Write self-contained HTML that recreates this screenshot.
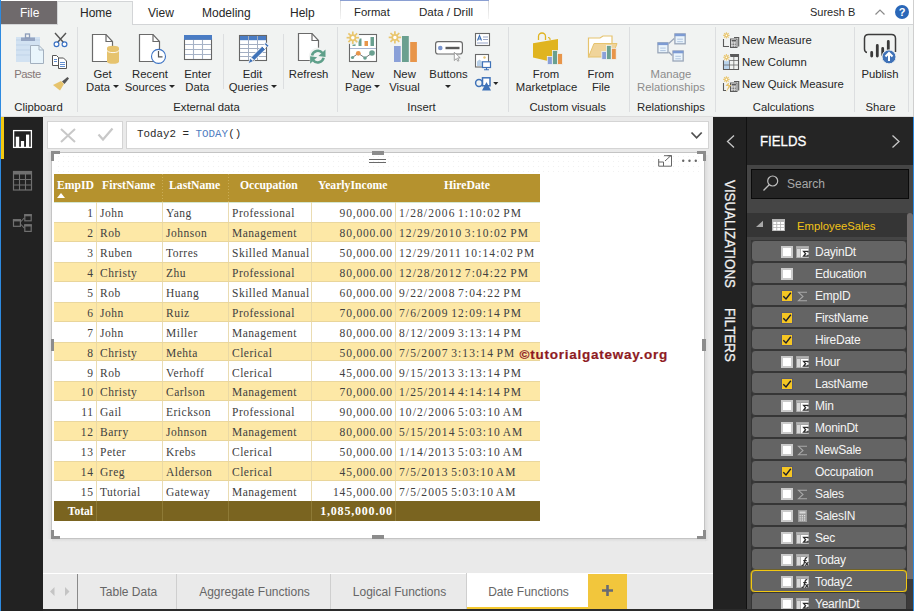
<!DOCTYPE html><html><head><meta charset="utf-8"><style>
*{margin:0;padding:0;box-sizing:border-box}
html,body{width:914px;height:611px;overflow:hidden;background:#fff;position:relative;font-family:"Liberation Sans",sans-serif;color:#252423}
.a{position:absolute}
.t{position:absolute;white-space:nowrap;font-size:11.3px;line-height:13px;color:#262626}
.c{text-align:center}
</style></head><body><div class="a" style="left:0;top:0;width:1px;height:611px;background:#2d8ae0"></div>
<div class="a" style="left:913px;top:0;width:1px;height:117px;background:#cfcfcf"></div>
<div class="a" style="left:1px;top:24px;width:912px;height:1px;background:#d3d5d7"></div>
<div class="a" style="left:1px;top:1px;width:56px;height:23px;background:#6f6a6c"></div>
<div class="t" style="left:20px;top:7px;font-size:12px;color:#fff">File</div>
<div class="a" style="left:57px;top:1px;width:76px;height:24px;background:#f1f3f2;border:1px solid #d3d5d7;border-bottom:none"></div>
<div class="t" style="left:80px;top:7px;font-size:12px">Home</div>
<div class="t" style="left:148px;top:7px;font-size:12px">View</div>
<div class="t" style="left:202px;top:7px;font-size:12px">Modeling</div>
<div class="t" style="left:290px;top:7px;font-size:12px">Help</div>
<div class="a" style="left:340px;top:0;width:149px;height:1px;background:#8a9fd2"></div>
<div class="a" style="left:340px;top:1px;width:1px;height:18px;background:linear-gradient(180deg,#d6d6d6,#f4f4f4)"></div>
<div class="a" style="left:488px;top:1px;width:1px;height:18px;background:linear-gradient(180deg,#d6d6d6,#f4f4f4)"></div>
<div class="t" style="left:354px;top:6px;font-size:11.3px">Format</div>
<div class="t" style="left:419px;top:5px;font-size:11.6px">Data / Drill</div>
<div class="t" style="left:810px;top:6px;font-size:11px">Suresh B</div>
<svg class="a" style="left:875px;top:9px" width="10" height="6"><path d="M0.5 5.5 L5 1 L9.5 5.5" stroke="#8a8a8a" fill="none" stroke-width="1.2"/></svg>
<div class="a" style="left:895px;top:5px;width:14px;height:14px;border-radius:50%;background:#2a67b8;color:#fff;font-weight:bold;font-size:11px;line-height:14px;text-align:center">?</div>
<div class="a" style="left:1px;top:25px;width:912px;height:91px;background:#f1f3f2"></div>
<div class="a" style="left:1px;top:116px;width:912px;height:1px;background:#dcdcdc"></div>
<div class="a" style="left:77px;top:27px;width:1px;height:85px;background:#dcdee0"></div>
<div class="a" style="left:223px;top:34px;width:1px;height:55px;background:#dcdee0"></div>
<div class="a" style="left:283px;top:34px;width:1px;height:55px;background:#dcdee0"></div>
<div class="a" style="left:337px;top:27px;width:1px;height:85px;background:#dcdee0"></div>
<div class="a" style="left:508px;top:27px;width:1px;height:85px;background:#dcdee0"></div>
<div class="a" style="left:629px;top:27px;width:1px;height:85px;background:#dcdee0"></div>
<div class="a" style="left:715px;top:27px;width:1px;height:85px;background:#dcdee0"></div>
<div class="a" style="left:854px;top:27px;width:1px;height:85px;background:#dcdee0"></div>
<div class="a" style="left:908px;top:27px;width:1px;height:85px;background:#dcdee0"></div>
<div class="t" style="left:-21.5px;top:100.5px;width:120px;text-align:center;">Clipboard</div>
<div class="t" style="left:146.5px;top:100.5px;width:120px;text-align:center;">External data</div>
<div class="t" style="left:361.5px;top:100.5px;width:120px;text-align:center;">Insert</div>
<div class="t" style="left:507.70000000000005px;top:100.5px;width:120px;text-align:center;">Custom visuals</div>
<div class="t" style="left:611px;top:100.5px;width:120px;text-align:center;">Relationships</div>
<div class="t" style="left:723.5px;top:100.5px;width:120px;text-align:center;">Calculations</div>
<div class="t" style="left:820.5px;top:100.5px;width:120px;text-align:center;">Share</div>
<div class="t" style="left:-32.5px;top:67.5px;width:120px;text-align:center;color:#857777;letter-spacing:-0.5px">Paste</div>
<div class="t" style="left:42.5px;top:67.5px;width:120px;text-align:center;">Get</div>
<div class="t" style="left:42.5px;top:80.5px;width:120px;text-align:center;">Data<span style="display:inline-block;width:0;height:0;border-left:3px solid transparent;border-right:3px solid transparent;border-top:3px solid #262626;vertical-align:middle;margin-left:3px;margin-bottom:2px"></span></div>
<div class="t" style="left:90px;top:67.5px;width:120px;text-align:center;">Recent</div>
<div class="t" style="left:90px;top:80.5px;width:120px;text-align:center;">Sources<span style="display:inline-block;width:0;height:0;border-left:3px solid transparent;border-right:3px solid transparent;border-top:3px solid #262626;vertical-align:middle;margin-left:3px;margin-bottom:2px"></span></div>
<div class="t" style="left:137.8px;top:67.5px;width:120px;text-align:center;">Enter</div>
<div class="t" style="left:137.3px;top:80.5px;width:120px;text-align:center;">Data</div>
<div class="t" style="left:192.5px;top:67.5px;width:120px;text-align:center;">Edit</div>
<div class="t" style="left:193px;top:80.5px;width:120px;text-align:center;">Queries<span style="display:inline-block;width:0;height:0;border-left:3px solid transparent;border-right:3px solid transparent;border-top:3px solid #262626;vertical-align:middle;margin-left:3px;margin-bottom:2px"></span></div>
<div class="t" style="left:248.60000000000002px;top:67.5px;width:120px;text-align:center;">Refresh</div>
<div class="t" style="left:302.8px;top:67.5px;width:120px;text-align:center;">New</div>
<div class="t" style="left:302.8px;top:80.5px;width:120px;text-align:center;">Page<span style="display:inline-block;width:0;height:0;border-left:3px solid transparent;border-right:3px solid transparent;border-top:3px solid #262626;vertical-align:middle;margin-left:3px;margin-bottom:2px"></span></div>
<div class="t" style="left:344.5px;top:67.5px;width:120px;text-align:center;">New</div>
<div class="t" style="left:344.5px;top:80.5px;width:120px;text-align:center;">Visual</div>
<div class="t" style="left:388.5px;top:67.5px;width:120px;text-align:center;">Buttons</div>
<div class="a" style="left:445px;top:85px;width:0;height:0;border-left:3px solid transparent;border-right:3px solid transparent;border-top:3px solid #262626"></div>
<div class="t" style="left:486px;top:67.5px;width:120px;text-align:center;">From</div>
<div class="t" style="left:486.5px;top:80.5px;width:120px;text-align:center;">Marketplace</div>
<div class="t" style="left:540.8px;top:67.5px;width:120px;text-align:center;">From</div>
<div class="t" style="left:541px;top:80.5px;width:120px;text-align:center;">File</div>
<div class="t" style="left:611px;top:67.5px;width:120px;text-align:center;color:#8c8c8c;">Manage</div>
<div class="t" style="left:611px;top:80.5px;width:120px;text-align:center;color:#8c8c8c;">Relationships</div>
<div class="t" style="left:742px;top:34px;">New Measure</div>
<div class="t" style="left:742px;top:56px;">New Column</div>
<div class="t" style="left:742px;top:78px;">New Quick Measure</div>
<div class="t" style="left:820px;top:67.5px;width:120px;text-align:center;">Publish</div>
<div class="a" style="left:1px;top:117px;width:42px;height:494px;background:#222222"></div>
<div class="a" style="left:1px;top:117px;width:3px;height:42px;background:#f2c811"></div>
<div class="a" style="left:43px;top:117px;width:670px;height:494px;background:#eaeaea"></div>
<div class="a" style="left:47px;top:121px;width:76px;height:28px;background:#fff;border:1px solid #d4d4d4"></div>
<div class="a" style="left:126px;top:121px;width:583px;height:28px;background:#fff;border:1px solid #d4d4d4"></div>
<div class="a" style="left:137px;top:127px;font-family:'Liberation Mono',monospace;font-size:10.85px;line-height:14px;color:#2a2a2a;white-space:nowrap">Today2 = <span style="color:#4f7dbf">TODAY</span>()</div>
<div class="a" style="left:47px;top:152px;width:5px;height:387px;background:linear-gradient(90deg,#eaeaea,#dedede)"></div>
<div class="a" style="left:52px;top:539px;width:654px;height:3px;background:linear-gradient(180deg,#dcdcdc,#eaeaea)"></div>
<div class="a" style="left:705px;top:155px;width:4px;height:386px;background:linear-gradient(90deg,#dcdcdc,#eaeaea)"></div>
<div class="a" style="left:51px;top:152px;width:654px;height:387px;background:#fff;border:1px solid #c4c4c4"></div>
<div class="a" style="left:56px;top:154px;width:644px;height:19px;background-image:radial-gradient(circle,#e6e6e6 0.5px,transparent 0.8px);background-size:5px 5px;opacity:0.55"></div>
<div class="a" style="left:51px;top:151px;width:9px;height:3px;background:#8c8c8c"></div>
<div class="a" style="left:51px;top:151px;width:3px;height:10px;background:#8c8c8c"></div>
<div class="a" style="left:697px;top:151px;width:9px;height:3px;background:#8c8c8c"></div>
<div class="a" style="left:703px;top:151px;width:3px;height:10px;background:#8c8c8c"></div>
<div class="a" style="left:51px;top:536px;width:9px;height:3px;background:#8c8c8c"></div>
<div class="a" style="left:51px;top:530px;width:3px;height:9px;background:#8c8c8c"></div>
<div class="a" style="left:697px;top:536px;width:9px;height:3px;background:#8c8c8c"></div>
<div class="a" style="left:703px;top:530px;width:3px;height:9px;background:#8c8c8c"></div>
<div class="a" style="left:372px;top:151px;width:12px;height:4px;background:#8c8c8c"></div>
<div class="a" style="left:372px;top:535px;width:12px;height:4px;background:#8c8c8c"></div>
<div class="a" style="left:51px;top:339px;width:3px;height:12px;background:#8c8c8c"></div>
<div class="a" style="left:702px;top:339px;width:4px;height:12px;background:#8c8c8c"></div>
<div class="a" style="left:369px;top:159px;width:17px;height:1px;background:#6a6a6a"></div>
<div class="a" style="left:369px;top:162px;width:17px;height:1px;background:#6a6a6a"></div>
<div class="a" style="left:54px;top:174px;width:486px;height:28px;background:#b5922e"></div>
<div class="a" style="left:54px;top:202px;width:486px;height:1px;background:#d3e6d0"></div>
<div class="a" style="left:162px;top:174px;width:1px;height:28px;background-image:linear-gradient(180deg,#d8bf70 50%,transparent 50%);background-size:1px 3px;opacity:0.6"></div>
<div class="a" style="left:228px;top:174px;width:1px;height:28px;background-image:linear-gradient(180deg,#d8bf70 50%,transparent 50%);background-size:1px 3px;opacity:0.6"></div>
<div class="a" style="left:57px;top:177px;font-family:'Liberation Serif',serif;font-size:11.7px;line-height:18px;color:#fff;font-weight:bold;white-space:nowrap">EmpID</div>
<div class="a" style="left:102px;top:177px;font-family:'Liberation Serif',serif;font-size:11.7px;line-height:18px;color:#fff;font-weight:bold;white-space:nowrap">FirstName</div>
<div class="a" style="left:169px;top:177px;font-family:'Liberation Serif',serif;font-size:11.7px;line-height:18px;color:#fff;font-weight:bold;white-space:nowrap">LastName</div>
<div class="a" style="left:240px;top:177px;font-family:'Liberation Serif',serif;font-size:11.7px;line-height:18px;color:#fff;font-weight:bold;white-space:nowrap">Occupation</div>
<div class="a" style="left:318px;top:177px;font-family:'Liberation Serif',serif;font-size:11.7px;line-height:18px;color:#fff;font-weight:bold;white-space:nowrap">YearlyIncome</div>
<div class="a" style="left:444px;top:177px;font-family:'Liberation Serif',serif;font-size:11.7px;line-height:18px;color:#fff;font-weight:bold;white-space:nowrap">HireDate</div>
<div class="a" style="left:57px;top:193px;width:0;height:0;border-left:4.5px solid transparent;border-right:4.5px solid transparent;border-bottom:5px solid #fff"></div>
<div class="a" style="left:54px;top:204.1px;width:42px;height:19.93px;text-align:right;padding-right:2.20px;font-family:'Liberation Serif',serif;font-size:11.5px;letter-spacing:0.8px;word-spacing:0px;line-height:19.93px;color:#404040;white-space:nowrap;">1</div>
<div class="a" style="left:96px;top:204.1px;width:66px;height:19.93px;text-align:left;padding-left:4px;font-family:'Liberation Serif',serif;font-size:11.5px;letter-spacing:0.5px;word-spacing:0px;line-height:19.93px;color:#404040;white-space:nowrap;">John</div>
<div class="a" style="left:162px;top:204.1px;width:66px;height:19.93px;text-align:left;padding-left:4px;font-family:'Liberation Serif',serif;font-size:11.5px;letter-spacing:0.5px;word-spacing:0px;line-height:19.93px;color:#404040;white-space:nowrap;">Yang</div>
<div class="a" style="left:228px;top:204.1px;width:83px;height:19.93px;text-align:left;padding-left:4px;font-family:'Liberation Serif',serif;font-size:11.5px;letter-spacing:0.5px;word-spacing:0px;line-height:19.93px;color:#404040;white-space:nowrap;">Professional</div>
<div class="a" style="left:311px;top:204.1px;width:84px;height:19.93px;text-align:right;padding-right:2.20px;font-family:'Liberation Serif',serif;font-size:11.5px;letter-spacing:0.8px;word-spacing:0px;line-height:19.93px;color:#404040;white-space:nowrap;">90,000.00</div>
<div class="a" style="left:395px;top:204.1px;width:145px;height:19.93px;text-align:left;padding-left:4px;font-family:'Liberation Serif',serif;font-size:11.5px;letter-spacing:1.1px;word-spacing:-1.5px;line-height:19.93px;color:#404040;white-space:nowrap;">1/28/2006 1:10:02 PM</div>
<div class="a" style="left:54px;top:221.93px;width:486px;height:19.93px;background:#fde8a6;border-top:1px solid #ead79e;border-bottom:1px solid #e9d59a"></div>
<div class="a" style="left:54px;top:224.03px;width:42px;height:19.93px;text-align:right;padding-right:2.20px;font-family:'Liberation Serif',serif;font-size:11.5px;letter-spacing:0.8px;word-spacing:0px;line-height:19.93px;color:#404040;white-space:nowrap;">2</div>
<div class="a" style="left:96px;top:224.03px;width:66px;height:19.93px;text-align:left;padding-left:4px;font-family:'Liberation Serif',serif;font-size:11.5px;letter-spacing:0.5px;word-spacing:0px;line-height:19.93px;color:#404040;white-space:nowrap;">Rob</div>
<div class="a" style="left:162px;top:224.03px;width:66px;height:19.93px;text-align:left;padding-left:4px;font-family:'Liberation Serif',serif;font-size:11.5px;letter-spacing:0.5px;word-spacing:0px;line-height:19.93px;color:#404040;white-space:nowrap;">Johnson</div>
<div class="a" style="left:228px;top:224.03px;width:83px;height:19.93px;text-align:left;padding-left:4px;font-family:'Liberation Serif',serif;font-size:11.5px;letter-spacing:0.5px;word-spacing:0px;line-height:19.93px;color:#404040;white-space:nowrap;">Management</div>
<div class="a" style="left:311px;top:224.03px;width:84px;height:19.93px;text-align:right;padding-right:2.20px;font-family:'Liberation Serif',serif;font-size:11.5px;letter-spacing:0.8px;word-spacing:0px;line-height:19.93px;color:#404040;white-space:nowrap;">80,000.00</div>
<div class="a" style="left:395px;top:224.03px;width:145px;height:19.93px;text-align:left;padding-left:4px;font-family:'Liberation Serif',serif;font-size:11.5px;letter-spacing:1.1px;word-spacing:-1.5px;line-height:19.93px;color:#404040;white-space:nowrap;">12/29/2010 3:10:02 PM</div>
<div class="a" style="left:54px;top:243.96px;width:42px;height:19.93px;text-align:right;padding-right:2.20px;font-family:'Liberation Serif',serif;font-size:11.5px;letter-spacing:0.8px;word-spacing:0px;line-height:19.93px;color:#404040;white-space:nowrap;">3</div>
<div class="a" style="left:96px;top:243.96px;width:66px;height:19.93px;text-align:left;padding-left:4px;font-family:'Liberation Serif',serif;font-size:11.5px;letter-spacing:0.5px;word-spacing:0px;line-height:19.93px;color:#404040;white-space:nowrap;">Ruben</div>
<div class="a" style="left:162px;top:243.96px;width:66px;height:19.93px;text-align:left;padding-left:4px;font-family:'Liberation Serif',serif;font-size:11.5px;letter-spacing:0.5px;word-spacing:0px;line-height:19.93px;color:#404040;white-space:nowrap;">Torres</div>
<div class="a" style="left:228px;top:243.96px;width:83px;height:19.93px;text-align:left;padding-left:4px;font-family:'Liberation Serif',serif;font-size:11.5px;letter-spacing:0.5px;word-spacing:0px;line-height:19.93px;color:#404040;white-space:nowrap;">Skilled Manual</div>
<div class="a" style="left:311px;top:243.96px;width:84px;height:19.93px;text-align:right;padding-right:2.20px;font-family:'Liberation Serif',serif;font-size:11.5px;letter-spacing:0.8px;word-spacing:0px;line-height:19.93px;color:#404040;white-space:nowrap;">50,000.00</div>
<div class="a" style="left:395px;top:243.96px;width:145px;height:19.93px;text-align:left;padding-left:4px;font-family:'Liberation Serif',serif;font-size:11.5px;letter-spacing:1.1px;word-spacing:-1.5px;line-height:19.93px;color:#404040;white-space:nowrap;">12/29/2011 10:14:02 PM</div>
<div class="a" style="left:54px;top:261.79px;width:486px;height:19.93px;background:#fde8a6;border-top:1px solid #ead79e;border-bottom:1px solid #e9d59a"></div>
<div class="a" style="left:54px;top:263.89000000000004px;width:42px;height:19.93px;text-align:right;padding-right:2.20px;font-family:'Liberation Serif',serif;font-size:11.5px;letter-spacing:0.8px;word-spacing:0px;line-height:19.93px;color:#404040;white-space:nowrap;">4</div>
<div class="a" style="left:96px;top:263.89000000000004px;width:66px;height:19.93px;text-align:left;padding-left:4px;font-family:'Liberation Serif',serif;font-size:11.5px;letter-spacing:0.5px;word-spacing:0px;line-height:19.93px;color:#404040;white-space:nowrap;">Christy</div>
<div class="a" style="left:162px;top:263.89000000000004px;width:66px;height:19.93px;text-align:left;padding-left:4px;font-family:'Liberation Serif',serif;font-size:11.5px;letter-spacing:0.5px;word-spacing:0px;line-height:19.93px;color:#404040;white-space:nowrap;">Zhu</div>
<div class="a" style="left:228px;top:263.89000000000004px;width:83px;height:19.93px;text-align:left;padding-left:4px;font-family:'Liberation Serif',serif;font-size:11.5px;letter-spacing:0.5px;word-spacing:0px;line-height:19.93px;color:#404040;white-space:nowrap;">Professional</div>
<div class="a" style="left:311px;top:263.89000000000004px;width:84px;height:19.93px;text-align:right;padding-right:2.20px;font-family:'Liberation Serif',serif;font-size:11.5px;letter-spacing:0.8px;word-spacing:0px;line-height:19.93px;color:#404040;white-space:nowrap;">80,000.00</div>
<div class="a" style="left:395px;top:263.89000000000004px;width:145px;height:19.93px;text-align:left;padding-left:4px;font-family:'Liberation Serif',serif;font-size:11.5px;letter-spacing:1.1px;word-spacing:-1.5px;line-height:19.93px;color:#404040;white-space:nowrap;">12/28/2012 7:04:22 PM</div>
<div class="a" style="left:54px;top:283.82000000000005px;width:42px;height:19.93px;text-align:right;padding-right:2.20px;font-family:'Liberation Serif',serif;font-size:11.5px;letter-spacing:0.8px;word-spacing:0px;line-height:19.93px;color:#404040;white-space:nowrap;">5</div>
<div class="a" style="left:96px;top:283.82000000000005px;width:66px;height:19.93px;text-align:left;padding-left:4px;font-family:'Liberation Serif',serif;font-size:11.5px;letter-spacing:0.5px;word-spacing:0px;line-height:19.93px;color:#404040;white-space:nowrap;">Rob</div>
<div class="a" style="left:162px;top:283.82000000000005px;width:66px;height:19.93px;text-align:left;padding-left:4px;font-family:'Liberation Serif',serif;font-size:11.5px;letter-spacing:0.5px;word-spacing:0px;line-height:19.93px;color:#404040;white-space:nowrap;">Huang</div>
<div class="a" style="left:228px;top:283.82000000000005px;width:83px;height:19.93px;text-align:left;padding-left:4px;font-family:'Liberation Serif',serif;font-size:11.5px;letter-spacing:0.5px;word-spacing:0px;line-height:19.93px;color:#404040;white-space:nowrap;">Skilled Manual</div>
<div class="a" style="left:311px;top:283.82000000000005px;width:84px;height:19.93px;text-align:right;padding-right:2.20px;font-family:'Liberation Serif',serif;font-size:11.5px;letter-spacing:0.8px;word-spacing:0px;line-height:19.93px;color:#404040;white-space:nowrap;">60,000.00</div>
<div class="a" style="left:395px;top:283.82000000000005px;width:145px;height:19.93px;text-align:left;padding-left:4px;font-family:'Liberation Serif',serif;font-size:11.5px;letter-spacing:1.1px;word-spacing:-1.5px;line-height:19.93px;color:#404040;white-space:nowrap;">9/22/2008 7:04:22 PM</div>
<div class="a" style="left:54px;top:301.65px;width:486px;height:19.93px;background:#fde8a6;border-top:1px solid #ead79e;border-bottom:1px solid #e9d59a"></div>
<div class="a" style="left:54px;top:303.75px;width:42px;height:19.93px;text-align:right;padding-right:2.20px;font-family:'Liberation Serif',serif;font-size:11.5px;letter-spacing:0.8px;word-spacing:0px;line-height:19.93px;color:#404040;white-space:nowrap;">6</div>
<div class="a" style="left:96px;top:303.75px;width:66px;height:19.93px;text-align:left;padding-left:4px;font-family:'Liberation Serif',serif;font-size:11.5px;letter-spacing:0.5px;word-spacing:0px;line-height:19.93px;color:#404040;white-space:nowrap;">John</div>
<div class="a" style="left:162px;top:303.75px;width:66px;height:19.93px;text-align:left;padding-left:4px;font-family:'Liberation Serif',serif;font-size:11.5px;letter-spacing:0.5px;word-spacing:0px;line-height:19.93px;color:#404040;white-space:nowrap;">Ruiz</div>
<div class="a" style="left:228px;top:303.75px;width:83px;height:19.93px;text-align:left;padding-left:4px;font-family:'Liberation Serif',serif;font-size:11.5px;letter-spacing:0.5px;word-spacing:0px;line-height:19.93px;color:#404040;white-space:nowrap;">Professional</div>
<div class="a" style="left:311px;top:303.75px;width:84px;height:19.93px;text-align:right;padding-right:2.20px;font-family:'Liberation Serif',serif;font-size:11.5px;letter-spacing:0.8px;word-spacing:0px;line-height:19.93px;color:#404040;white-space:nowrap;">70,000.00</div>
<div class="a" style="left:395px;top:303.75px;width:145px;height:19.93px;text-align:left;padding-left:4px;font-family:'Liberation Serif',serif;font-size:11.5px;letter-spacing:1.1px;word-spacing:-1.5px;line-height:19.93px;color:#404040;white-space:nowrap;">7/6/2009 12:09:14 PM</div>
<div class="a" style="left:54px;top:323.68px;width:42px;height:19.93px;text-align:right;padding-right:2.20px;font-family:'Liberation Serif',serif;font-size:11.5px;letter-spacing:0.8px;word-spacing:0px;line-height:19.93px;color:#404040;white-space:nowrap;">7</div>
<div class="a" style="left:96px;top:323.68px;width:66px;height:19.93px;text-align:left;padding-left:4px;font-family:'Liberation Serif',serif;font-size:11.5px;letter-spacing:0.5px;word-spacing:0px;line-height:19.93px;color:#404040;white-space:nowrap;">John</div>
<div class="a" style="left:162px;top:323.68px;width:66px;height:19.93px;text-align:left;padding-left:4px;font-family:'Liberation Serif',serif;font-size:11.5px;letter-spacing:0.5px;word-spacing:0px;line-height:19.93px;color:#404040;white-space:nowrap;">Miller</div>
<div class="a" style="left:228px;top:323.68px;width:83px;height:19.93px;text-align:left;padding-left:4px;font-family:'Liberation Serif',serif;font-size:11.5px;letter-spacing:0.5px;word-spacing:0px;line-height:19.93px;color:#404040;white-space:nowrap;">Management</div>
<div class="a" style="left:311px;top:323.68px;width:84px;height:19.93px;text-align:right;padding-right:2.20px;font-family:'Liberation Serif',serif;font-size:11.5px;letter-spacing:0.8px;word-spacing:0px;line-height:19.93px;color:#404040;white-space:nowrap;">80,000.00</div>
<div class="a" style="left:395px;top:323.68px;width:145px;height:19.93px;text-align:left;padding-left:4px;font-family:'Liberation Serif',serif;font-size:11.5px;letter-spacing:1.1px;word-spacing:-1.5px;line-height:19.93px;color:#404040;white-space:nowrap;">8/12/2009 3:13:14 PM</div>
<div class="a" style="left:54px;top:341.51px;width:486px;height:19.93px;background:#fde8a6;border-top:1px solid #ead79e;border-bottom:1px solid #e9d59a"></div>
<div class="a" style="left:54px;top:343.61px;width:42px;height:19.93px;text-align:right;padding-right:2.20px;font-family:'Liberation Serif',serif;font-size:11.5px;letter-spacing:0.8px;word-spacing:0px;line-height:19.93px;color:#404040;white-space:nowrap;">8</div>
<div class="a" style="left:96px;top:343.61px;width:66px;height:19.93px;text-align:left;padding-left:4px;font-family:'Liberation Serif',serif;font-size:11.5px;letter-spacing:0.5px;word-spacing:0px;line-height:19.93px;color:#404040;white-space:nowrap;">Christy</div>
<div class="a" style="left:162px;top:343.61px;width:66px;height:19.93px;text-align:left;padding-left:4px;font-family:'Liberation Serif',serif;font-size:11.5px;letter-spacing:0.5px;word-spacing:0px;line-height:19.93px;color:#404040;white-space:nowrap;">Mehta</div>
<div class="a" style="left:228px;top:343.61px;width:83px;height:19.93px;text-align:left;padding-left:4px;font-family:'Liberation Serif',serif;font-size:11.5px;letter-spacing:0.5px;word-spacing:0px;line-height:19.93px;color:#404040;white-space:nowrap;">Clerical</div>
<div class="a" style="left:311px;top:343.61px;width:84px;height:19.93px;text-align:right;padding-right:2.20px;font-family:'Liberation Serif',serif;font-size:11.5px;letter-spacing:0.8px;word-spacing:0px;line-height:19.93px;color:#404040;white-space:nowrap;">50,000.00</div>
<div class="a" style="left:395px;top:343.61px;width:145px;height:19.93px;text-align:left;padding-left:4px;font-family:'Liberation Serif',serif;font-size:11.5px;letter-spacing:1.1px;word-spacing:-1.5px;line-height:19.93px;color:#404040;white-space:nowrap;">7/5/2007 3:13:14 PM</div>
<div class="a" style="left:54px;top:363.54px;width:42px;height:19.93px;text-align:right;padding-right:2.20px;font-family:'Liberation Serif',serif;font-size:11.5px;letter-spacing:0.8px;word-spacing:0px;line-height:19.93px;color:#404040;white-space:nowrap;">9</div>
<div class="a" style="left:96px;top:363.54px;width:66px;height:19.93px;text-align:left;padding-left:4px;font-family:'Liberation Serif',serif;font-size:11.5px;letter-spacing:0.5px;word-spacing:0px;line-height:19.93px;color:#404040;white-space:nowrap;">Rob</div>
<div class="a" style="left:162px;top:363.54px;width:66px;height:19.93px;text-align:left;padding-left:4px;font-family:'Liberation Serif',serif;font-size:11.5px;letter-spacing:0.5px;word-spacing:0px;line-height:19.93px;color:#404040;white-space:nowrap;">Verhoff</div>
<div class="a" style="left:228px;top:363.54px;width:83px;height:19.93px;text-align:left;padding-left:4px;font-family:'Liberation Serif',serif;font-size:11.5px;letter-spacing:0.5px;word-spacing:0px;line-height:19.93px;color:#404040;white-space:nowrap;">Clerical</div>
<div class="a" style="left:311px;top:363.54px;width:84px;height:19.93px;text-align:right;padding-right:2.20px;font-family:'Liberation Serif',serif;font-size:11.5px;letter-spacing:0.8px;word-spacing:0px;line-height:19.93px;color:#404040;white-space:nowrap;">45,000.00</div>
<div class="a" style="left:395px;top:363.54px;width:145px;height:19.93px;text-align:left;padding-left:4px;font-family:'Liberation Serif',serif;font-size:11.5px;letter-spacing:1.1px;word-spacing:-1.5px;line-height:19.93px;color:#404040;white-space:nowrap;">9/15/2013 3:13:14 PM</div>
<div class="a" style="left:54px;top:381.37px;width:486px;height:19.93px;background:#fde8a6;border-top:1px solid #ead79e;border-bottom:1px solid #e9d59a"></div>
<div class="a" style="left:54px;top:383.47px;width:42px;height:19.93px;text-align:right;padding-right:2.20px;font-family:'Liberation Serif',serif;font-size:11.5px;letter-spacing:0.8px;word-spacing:0px;line-height:19.93px;color:#404040;white-space:nowrap;">10</div>
<div class="a" style="left:96px;top:383.47px;width:66px;height:19.93px;text-align:left;padding-left:4px;font-family:'Liberation Serif',serif;font-size:11.5px;letter-spacing:0.5px;word-spacing:0px;line-height:19.93px;color:#404040;white-space:nowrap;">Christy</div>
<div class="a" style="left:162px;top:383.47px;width:66px;height:19.93px;text-align:left;padding-left:4px;font-family:'Liberation Serif',serif;font-size:11.5px;letter-spacing:0.5px;word-spacing:0px;line-height:19.93px;color:#404040;white-space:nowrap;">Carlson</div>
<div class="a" style="left:228px;top:383.47px;width:83px;height:19.93px;text-align:left;padding-left:4px;font-family:'Liberation Serif',serif;font-size:11.5px;letter-spacing:0.5px;word-spacing:0px;line-height:19.93px;color:#404040;white-space:nowrap;">Management</div>
<div class="a" style="left:311px;top:383.47px;width:84px;height:19.93px;text-align:right;padding-right:2.20px;font-family:'Liberation Serif',serif;font-size:11.5px;letter-spacing:0.8px;word-spacing:0px;line-height:19.93px;color:#404040;white-space:nowrap;">70,000.00</div>
<div class="a" style="left:395px;top:383.47px;width:145px;height:19.93px;text-align:left;padding-left:4px;font-family:'Liberation Serif',serif;font-size:11.5px;letter-spacing:1.1px;word-spacing:-1.5px;line-height:19.93px;color:#404040;white-space:nowrap;">1/25/2014 4:14:14 PM</div>
<div class="a" style="left:54px;top:403.40000000000003px;width:42px;height:19.93px;text-align:right;padding-right:2.20px;font-family:'Liberation Serif',serif;font-size:11.5px;letter-spacing:0.8px;word-spacing:0px;line-height:19.93px;color:#404040;white-space:nowrap;">11</div>
<div class="a" style="left:96px;top:403.40000000000003px;width:66px;height:19.93px;text-align:left;padding-left:4px;font-family:'Liberation Serif',serif;font-size:11.5px;letter-spacing:0.5px;word-spacing:0px;line-height:19.93px;color:#404040;white-space:nowrap;">Gail</div>
<div class="a" style="left:162px;top:403.40000000000003px;width:66px;height:19.93px;text-align:left;padding-left:4px;font-family:'Liberation Serif',serif;font-size:11.5px;letter-spacing:0.5px;word-spacing:0px;line-height:19.93px;color:#404040;white-space:nowrap;">Erickson</div>
<div class="a" style="left:228px;top:403.40000000000003px;width:83px;height:19.93px;text-align:left;padding-left:4px;font-family:'Liberation Serif',serif;font-size:11.5px;letter-spacing:0.5px;word-spacing:0px;line-height:19.93px;color:#404040;white-space:nowrap;">Professional</div>
<div class="a" style="left:311px;top:403.40000000000003px;width:84px;height:19.93px;text-align:right;padding-right:2.20px;font-family:'Liberation Serif',serif;font-size:11.5px;letter-spacing:0.8px;word-spacing:0px;line-height:19.93px;color:#404040;white-space:nowrap;">90,000.00</div>
<div class="a" style="left:395px;top:403.40000000000003px;width:145px;height:19.93px;text-align:left;padding-left:4px;font-family:'Liberation Serif',serif;font-size:11.5px;letter-spacing:1.1px;word-spacing:-1.5px;line-height:19.93px;color:#404040;white-space:nowrap;">10/2/2006 5:03:10 AM</div>
<div class="a" style="left:54px;top:421.23px;width:486px;height:19.93px;background:#fde8a6;border-top:1px solid #ead79e;border-bottom:1px solid #e9d59a"></div>
<div class="a" style="left:54px;top:423.33000000000004px;width:42px;height:19.93px;text-align:right;padding-right:2.20px;font-family:'Liberation Serif',serif;font-size:11.5px;letter-spacing:0.8px;word-spacing:0px;line-height:19.93px;color:#404040;white-space:nowrap;">12</div>
<div class="a" style="left:96px;top:423.33000000000004px;width:66px;height:19.93px;text-align:left;padding-left:4px;font-family:'Liberation Serif',serif;font-size:11.5px;letter-spacing:0.5px;word-spacing:0px;line-height:19.93px;color:#404040;white-space:nowrap;">Barry</div>
<div class="a" style="left:162px;top:423.33000000000004px;width:66px;height:19.93px;text-align:left;padding-left:4px;font-family:'Liberation Serif',serif;font-size:11.5px;letter-spacing:0.5px;word-spacing:0px;line-height:19.93px;color:#404040;white-space:nowrap;">Johnson</div>
<div class="a" style="left:228px;top:423.33000000000004px;width:83px;height:19.93px;text-align:left;padding-left:4px;font-family:'Liberation Serif',serif;font-size:11.5px;letter-spacing:0.5px;word-spacing:0px;line-height:19.93px;color:#404040;white-space:nowrap;">Management</div>
<div class="a" style="left:311px;top:423.33000000000004px;width:84px;height:19.93px;text-align:right;padding-right:2.20px;font-family:'Liberation Serif',serif;font-size:11.5px;letter-spacing:0.8px;word-spacing:0px;line-height:19.93px;color:#404040;white-space:nowrap;">80,000.00</div>
<div class="a" style="left:395px;top:423.33000000000004px;width:145px;height:19.93px;text-align:left;padding-left:4px;font-family:'Liberation Serif',serif;font-size:11.5px;letter-spacing:1.1px;word-spacing:-1.5px;line-height:19.93px;color:#404040;white-space:nowrap;">5/15/2014 5:03:10 AM</div>
<div class="a" style="left:54px;top:443.26000000000005px;width:42px;height:19.93px;text-align:right;padding-right:2.20px;font-family:'Liberation Serif',serif;font-size:11.5px;letter-spacing:0.8px;word-spacing:0px;line-height:19.93px;color:#404040;white-space:nowrap;">13</div>
<div class="a" style="left:96px;top:443.26000000000005px;width:66px;height:19.93px;text-align:left;padding-left:4px;font-family:'Liberation Serif',serif;font-size:11.5px;letter-spacing:0.5px;word-spacing:0px;line-height:19.93px;color:#404040;white-space:nowrap;">Peter</div>
<div class="a" style="left:162px;top:443.26000000000005px;width:66px;height:19.93px;text-align:left;padding-left:4px;font-family:'Liberation Serif',serif;font-size:11.5px;letter-spacing:0.5px;word-spacing:0px;line-height:19.93px;color:#404040;white-space:nowrap;">Krebs</div>
<div class="a" style="left:228px;top:443.26000000000005px;width:83px;height:19.93px;text-align:left;padding-left:4px;font-family:'Liberation Serif',serif;font-size:11.5px;letter-spacing:0.5px;word-spacing:0px;line-height:19.93px;color:#404040;white-space:nowrap;">Clerical</div>
<div class="a" style="left:311px;top:443.26000000000005px;width:84px;height:19.93px;text-align:right;padding-right:2.20px;font-family:'Liberation Serif',serif;font-size:11.5px;letter-spacing:0.8px;word-spacing:0px;line-height:19.93px;color:#404040;white-space:nowrap;">50,000.00</div>
<div class="a" style="left:395px;top:443.26000000000005px;width:145px;height:19.93px;text-align:left;padding-left:4px;font-family:'Liberation Serif',serif;font-size:11.5px;letter-spacing:1.1px;word-spacing:-1.5px;line-height:19.93px;color:#404040;white-space:nowrap;">1/14/2013 5:03:10 AM</div>
<div class="a" style="left:54px;top:461.09px;width:486px;height:19.93px;background:#fde8a6;border-top:1px solid #ead79e;border-bottom:1px solid #e9d59a"></div>
<div class="a" style="left:54px;top:463.19px;width:42px;height:19.93px;text-align:right;padding-right:2.20px;font-family:'Liberation Serif',serif;font-size:11.5px;letter-spacing:0.8px;word-spacing:0px;line-height:19.93px;color:#404040;white-space:nowrap;">14</div>
<div class="a" style="left:96px;top:463.19px;width:66px;height:19.93px;text-align:left;padding-left:4px;font-family:'Liberation Serif',serif;font-size:11.5px;letter-spacing:0.5px;word-spacing:0px;line-height:19.93px;color:#404040;white-space:nowrap;">Greg</div>
<div class="a" style="left:162px;top:463.19px;width:66px;height:19.93px;text-align:left;padding-left:4px;font-family:'Liberation Serif',serif;font-size:11.5px;letter-spacing:0.5px;word-spacing:0px;line-height:19.93px;color:#404040;white-space:nowrap;">Alderson</div>
<div class="a" style="left:228px;top:463.19px;width:83px;height:19.93px;text-align:left;padding-left:4px;font-family:'Liberation Serif',serif;font-size:11.5px;letter-spacing:0.5px;word-spacing:0px;line-height:19.93px;color:#404040;white-space:nowrap;">Clerical</div>
<div class="a" style="left:311px;top:463.19px;width:84px;height:19.93px;text-align:right;padding-right:2.20px;font-family:'Liberation Serif',serif;font-size:11.5px;letter-spacing:0.8px;word-spacing:0px;line-height:19.93px;color:#404040;white-space:nowrap;">45,000.00</div>
<div class="a" style="left:395px;top:463.19px;width:145px;height:19.93px;text-align:left;padding-left:4px;font-family:'Liberation Serif',serif;font-size:11.5px;letter-spacing:1.1px;word-spacing:-1.5px;line-height:19.93px;color:#404040;white-space:nowrap;">7/5/2013 5:03:10 AM</div>
<div class="a" style="left:54px;top:483.12px;width:42px;height:19.93px;text-align:right;padding-right:2.20px;font-family:'Liberation Serif',serif;font-size:11.5px;letter-spacing:0.8px;word-spacing:0px;line-height:19.93px;color:#404040;white-space:nowrap;">15</div>
<div class="a" style="left:96px;top:483.12px;width:66px;height:19.93px;text-align:left;padding-left:4px;font-family:'Liberation Serif',serif;font-size:11.5px;letter-spacing:0.5px;word-spacing:0px;line-height:19.93px;color:#404040;white-space:nowrap;">Tutorial</div>
<div class="a" style="left:162px;top:483.12px;width:66px;height:19.93px;text-align:left;padding-left:4px;font-family:'Liberation Serif',serif;font-size:11.5px;letter-spacing:0.5px;word-spacing:0px;line-height:19.93px;color:#404040;white-space:nowrap;">Gateway</div>
<div class="a" style="left:228px;top:483.12px;width:83px;height:19.93px;text-align:left;padding-left:4px;font-family:'Liberation Serif',serif;font-size:11.5px;letter-spacing:0.5px;word-spacing:0px;line-height:19.93px;color:#404040;white-space:nowrap;">Management</div>
<div class="a" style="left:311px;top:483.12px;width:84px;height:19.93px;text-align:right;padding-right:2.20px;font-family:'Liberation Serif',serif;font-size:11.5px;letter-spacing:0.8px;word-spacing:0px;line-height:19.93px;color:#404040;white-space:nowrap;">145,000.00</div>
<div class="a" style="left:395px;top:483.12px;width:145px;height:19.93px;text-align:left;padding-left:4px;font-family:'Liberation Serif',serif;font-size:11.5px;letter-spacing:1.1px;word-spacing:-1.5px;line-height:19.93px;color:#404040;white-space:nowrap;">7/5/2005 5:03:10 AM</div>
<div class="a" style="left:54px;top:500.95px;width:486px;height:20px;background:#7a6420"></div>
<div class="a" style="left:54px;top:500.95px;width:42px;height:20px;text-align:right;padding-right:3.00px;font-family:'Liberation Serif',serif;font-size:11.5px;letter-spacing:0px;word-spacing:0px;line-height:20px;color:#fff;white-space:nowrap;font-weight:bold;">Total</div>
<div class="a" style="left:311px;top:500.95px;width:84px;height:20px;text-align:right;padding-right:2.20px;font-family:'Liberation Serif',serif;font-size:12px;letter-spacing:0.8px;word-spacing:0px;line-height:20px;color:#fff;white-space:nowrap;font-weight:bold;">1,085,000.00</div>
<div class="a" style="left:96px;top:202px;width:1px;height:298.95px;background:#e6d6a4;opacity:0.85"></div>
<div class="a" style="left:96px;top:500.95px;width:1px;height:20px;background:#8e7a36"></div>
<div class="a" style="left:162px;top:202px;width:1px;height:298.95px;background:#e6d6a4;opacity:0.85"></div>
<div class="a" style="left:162px;top:500.95px;width:1px;height:20px;background:#8e7a36"></div>
<div class="a" style="left:228px;top:202px;width:1px;height:298.95px;background:#e6d6a4;opacity:0.85"></div>
<div class="a" style="left:228px;top:500.95px;width:1px;height:20px;background:#8e7a36"></div>
<div class="a" style="left:311px;top:202px;width:1px;height:298.95px;background:#e6d6a4;opacity:0.85"></div>
<div class="a" style="left:311px;top:500.95px;width:1px;height:20px;background:#8e7a36"></div>
<div class="a" style="left:395px;top:202px;width:1px;height:298.95px;background:#e6d6a4;opacity:0.85"></div>
<div class="a" style="left:395px;top:500.95px;width:1px;height:20px;background:#8e7a36"></div>
<div class="a" style="left:519.5px;top:345px;font-family:'Liberation Sans',sans-serif;font-weight:bold;font-size:13.5px;letter-spacing:0.75px;-webkit-text-stroke:0.2px #8e1b1f;line-height:20px;color:#8e1b1f;white-space:nowrap">©tutorialgateway.org</div>
<div class="a" style="left:43px;top:573px;width:670px;height:1px;background:#fff"></div>
<div class="a" style="left:43px;top:609px;width:670px;height:2px;background:#2b2b2b"></div>
<div class="a" style="left:77px;top:574px;width:1px;height:35px;background:#8a8a8a"></div>
<div class="a" style="left:176px;top:574px;width:1px;height:35px;background:#cfcfcf"></div>
<div class="a" style="left:330px;top:574px;width:1px;height:35px;background:#cfcfcf"></div>
<div class="a" style="left:466px;top:573px;width:122px;height:36px;background:#fff;border-left:1px solid #cfcfcf"></div>
<div class="a" style="left:467px;top:607px;width:121px;height:2px;background:#f5c92f"></div>
<div class="a" style="left:588px;top:574px;width:39px;height:35px;background:#f2c63c"></div>
<svg class="a" style="left:601px;top:584px" width="13" height="13"><path d="M6.5 1 L6.5 12 M1 6.5 L12 6.5" stroke="#676a74" stroke-width="2.6"/></svg>
<div class="t" style="left:58.5px;top:585px;width:140px;text-align:center;font-size:12px;line-height:14px;color:#666">Table Data</div>
<div class="t" style="left:184.5px;top:585px;width:140px;text-align:center;font-size:12px;line-height:14px;color:#666">Aggregate Functions</div>
<div class="t" style="left:329.5px;top:585px;width:140px;text-align:center;font-size:12px;line-height:14px;color:#666">Logical Functions</div>
<div class="t" style="left:458.5px;top:585px;width:140px;text-align:center;font-size:12px;line-height:14px;color:#666">Date Functions</div>
<div class="a" style="left:713px;top:117px;width:201px;height:494px;background:#222222"></div>
<div class="a" style="left:746px;top:117px;width:1px;height:494px;background:#111"></div>
<div class="a" style="left:747px;top:117px;width:167px;height:48px;background:#252525"></div>
<div class="t" style="left:759.5px;top:131.5px;transform-origin:0 0;transform:scaleX(0.88);font-size:15px;line-height:17px;-webkit-text-stroke:0.3px #fff;color:#fff">FIELDS</div>
<div class="a" style="left:747px;top:165px;width:167px;height:48px;background:#454545"></div>
<div class="a" style="left:751px;top:169px;width:158px;height:30px;background:#232323;border:1px solid #0a0a0a"></div>
<div class="t" style="left:787px;top:177px;font-size:12px;line-height:14px;color:#a8a8a8">Search</div>
<div class="a" style="left:747px;top:213px;width:167px;height:24px;background:#353535"></div>
<div class="t" style="left:797px;top:219px;font-size:11.3px;line-height:14px;color:#f2c318">EmployeeSales</div>
<div class="a" style="left:747px;top:237px;width:167px;height:374px;background:#454545"></div>
<div class="a" style="left:751px;top:240px;width:156px;height:371px;background:#363636"></div>
<div class="a" style="left:751px;top:240px;width:156px;height:22px;background:#646464;border:1px solid #363636;border-radius:4px"></div>
<div class="a" style="left:781px;top:246px;width:12px;height:12px;background:#fff;border:2px solid #cacaca"></div>
<svg class="a" style="left:796px;top:246px" width="13" height="12"><rect x="0" y="0" width="13" height="12" fill="#a0a0a0"/><rect x="0.5" y="0.5" width="12" height="1.8" fill="#b0b0b0"/><rect x="1" y="3" width="3.3" height="8.3" fill="#d8d8d8"/><rect x="5" y="3" width="7.3" height="8.3" fill="#fff"/><path d="M12 6.6 L12 5.3 L7.6 5.3 L9.6 7.7 L7.6 10.1 L12 10.1 L12 8.8" stroke="#2a2a2a" stroke-width="1.3" fill="none"/></svg>
<div class="t" style="left:815px;top:245px;font-size:12px;letter-spacing:-0.25px;line-height:14px;color:#f4f4f4">DayinDt</div>
<div class="a" style="left:751px;top:262px;width:156px;height:22px;background:#646464;border:1px solid #363636;border-radius:4px"></div>
<div class="a" style="left:781px;top:268px;width:12px;height:12px;background:#fff;border:2px solid #cacaca"></div>
<div class="t" style="left:815px;top:267px;font-size:12px;letter-spacing:-0.25px;line-height:14px;color:#f4f4f4">Education</div>
<div class="a" style="left:751px;top:284px;width:156px;height:22px;background:#646464;border:1px solid #363636;border-radius:4px"></div>
<div class="a" style="left:781px;top:290px;width:12px;height:12px;background:#f5c623;border:0.5px solid #5a5a6a"></div>
<svg class="a" style="left:781px;top:290px" width="12" height="12"><path d="M2.3 6.3 L5 9 L9.8 2.8" stroke="#1d1f2e" stroke-width="1.4" fill="none"/></svg>
<svg class="a" style="left:797px;top:290px" width="12" height="12"><path d="M10 2.3 L1.5 2.3 L6 6.5 L1.5 10.7 L10 10.7" stroke="#a8a8a8" stroke-width="1.1" fill="none"/></svg>
<div class="t" style="left:815px;top:289px;font-size:12px;letter-spacing:-0.25px;line-height:14px;color:#f4f4f4">EmpID</div>
<div class="a" style="left:751px;top:306px;width:156px;height:22px;background:#646464;border:1px solid #363636;border-radius:4px"></div>
<div class="a" style="left:781px;top:312px;width:12px;height:12px;background:#f5c623;border:0.5px solid #5a5a6a"></div>
<svg class="a" style="left:781px;top:312px" width="12" height="12"><path d="M2.3 6.3 L5 9 L9.8 2.8" stroke="#1d1f2e" stroke-width="1.4" fill="none"/></svg>
<div class="t" style="left:815px;top:311px;font-size:12px;letter-spacing:-0.25px;line-height:14px;color:#f4f4f4">FirstName</div>
<div class="a" style="left:751px;top:328px;width:156px;height:22px;background:#646464;border:1px solid #363636;border-radius:4px"></div>
<div class="a" style="left:781px;top:334px;width:12px;height:12px;background:#f5c623;border:0.5px solid #5a5a6a"></div>
<svg class="a" style="left:781px;top:334px" width="12" height="12"><path d="M2.3 6.3 L5 9 L9.8 2.8" stroke="#1d1f2e" stroke-width="1.4" fill="none"/></svg>
<div class="t" style="left:815px;top:333px;font-size:12px;letter-spacing:-0.25px;line-height:14px;color:#f4f4f4">HireDate</div>
<div class="a" style="left:751px;top:350px;width:156px;height:22px;background:#646464;border:1px solid #363636;border-radius:4px"></div>
<div class="a" style="left:781px;top:356px;width:12px;height:12px;background:#fff;border:2px solid #cacaca"></div>
<svg class="a" style="left:796px;top:356px" width="13" height="12"><rect x="0" y="0" width="13" height="12" fill="#a0a0a0"/><rect x="0.5" y="0.5" width="12" height="1.8" fill="#b0b0b0"/><rect x="1" y="3" width="3.3" height="8.3" fill="#d8d8d8"/><rect x="5" y="3" width="7.3" height="8.3" fill="#fff"/><path d="M12 6.6 L12 5.3 L7.6 5.3 L9.6 7.7 L7.6 10.1 L12 10.1 L12 8.8" stroke="#2a2a2a" stroke-width="1.3" fill="none"/></svg>
<div class="t" style="left:815px;top:355px;font-size:12px;letter-spacing:-0.25px;line-height:14px;color:#f4f4f4">Hour</div>
<div class="a" style="left:751px;top:372px;width:156px;height:22px;background:#646464;border:1px solid #363636;border-radius:4px"></div>
<div class="a" style="left:781px;top:378px;width:12px;height:12px;background:#f5c623;border:0.5px solid #5a5a6a"></div>
<svg class="a" style="left:781px;top:378px" width="12" height="12"><path d="M2.3 6.3 L5 9 L9.8 2.8" stroke="#1d1f2e" stroke-width="1.4" fill="none"/></svg>
<div class="t" style="left:815px;top:377px;font-size:12px;letter-spacing:-0.25px;line-height:14px;color:#f4f4f4">LastName</div>
<div class="a" style="left:751px;top:394px;width:156px;height:22px;background:#646464;border:1px solid #363636;border-radius:4px"></div>
<div class="a" style="left:781px;top:400px;width:12px;height:12px;background:#fff;border:2px solid #cacaca"></div>
<svg class="a" style="left:796px;top:400px" width="13" height="12"><rect x="0" y="0" width="13" height="12" fill="#a0a0a0"/><rect x="0.5" y="0.5" width="12" height="1.8" fill="#b0b0b0"/><rect x="1" y="3" width="3.3" height="8.3" fill="#d8d8d8"/><rect x="5" y="3" width="7.3" height="8.3" fill="#fff"/><path d="M12 6.6 L12 5.3 L7.6 5.3 L9.6 7.7 L7.6 10.1 L12 10.1 L12 8.8" stroke="#2a2a2a" stroke-width="1.3" fill="none"/></svg>
<div class="t" style="left:815px;top:399px;font-size:12px;letter-spacing:-0.25px;line-height:14px;color:#f4f4f4">Min</div>
<div class="a" style="left:751px;top:416px;width:156px;height:22px;background:#646464;border:1px solid #363636;border-radius:4px"></div>
<div class="a" style="left:781px;top:422px;width:12px;height:12px;background:#fff;border:2px solid #cacaca"></div>
<svg class="a" style="left:796px;top:422px" width="13" height="12"><rect x="0" y="0" width="13" height="12" fill="#a0a0a0"/><rect x="0.5" y="0.5" width="12" height="1.8" fill="#b0b0b0"/><rect x="1" y="3" width="3.3" height="8.3" fill="#d8d8d8"/><rect x="5" y="3" width="7.3" height="8.3" fill="#fff"/><path d="M12 6.6 L12 5.3 L7.6 5.3 L9.6 7.7 L7.6 10.1 L12 10.1 L12 8.8" stroke="#2a2a2a" stroke-width="1.3" fill="none"/></svg>
<div class="t" style="left:815px;top:421px;font-size:12px;letter-spacing:-0.25px;line-height:14px;color:#f4f4f4">MoninDt</div>
<div class="a" style="left:751px;top:438px;width:156px;height:22px;background:#646464;border:1px solid #363636;border-radius:4px"></div>
<div class="a" style="left:781px;top:444px;width:12px;height:12px;background:#fff;border:2px solid #cacaca"></div>
<svg class="a" style="left:797px;top:444px" width="12" height="12"><path d="M10 2.3 L1.5 2.3 L6 6.5 L1.5 10.7 L10 10.7" stroke="#a8a8a8" stroke-width="1.1" fill="none"/></svg>
<div class="t" style="left:815px;top:443px;font-size:12px;letter-spacing:-0.25px;line-height:14px;color:#f4f4f4">NewSale</div>
<div class="a" style="left:751px;top:460px;width:156px;height:22px;background:#646464;border:1px solid #363636;border-radius:4px"></div>
<div class="a" style="left:781px;top:466px;width:12px;height:12px;background:#f5c623;border:0.5px solid #5a5a6a"></div>
<svg class="a" style="left:781px;top:466px" width="12" height="12"><path d="M2.3 6.3 L5 9 L9.8 2.8" stroke="#1d1f2e" stroke-width="1.4" fill="none"/></svg>
<div class="t" style="left:815px;top:465px;font-size:12px;letter-spacing:-0.25px;line-height:14px;color:#f4f4f4">Occupation</div>
<div class="a" style="left:751px;top:482px;width:156px;height:22px;background:#646464;border:1px solid #363636;border-radius:4px"></div>
<div class="a" style="left:781px;top:488px;width:12px;height:12px;background:#fff;border:2px solid #cacaca"></div>
<svg class="a" style="left:797px;top:488px" width="12" height="12"><path d="M10 2.3 L1.5 2.3 L6 6.5 L1.5 10.7 L10 10.7" stroke="#a8a8a8" stroke-width="1.1" fill="none"/></svg>
<div class="t" style="left:815px;top:487px;font-size:12px;letter-spacing:-0.25px;line-height:14px;color:#f4f4f4">Sales</div>
<div class="a" style="left:751px;top:504px;width:156px;height:22px;background:#646464;border:1px solid #363636;border-radius:4px"></div>
<div class="a" style="left:781px;top:510px;width:12px;height:12px;background:#fff;border:2px solid #cacaca"></div>
<svg class="a" style="left:798px;top:510px" width="9" height="12"><rect x="0" y="0" width="9" height="12" fill="#9c9c9c"/><rect x="1.5" y="1.5" width="6" height="2" fill="#d8d8d8"/><rect x="1.5" y="5.0" width="1.3" height="1.3" fill="#e0e0e0"/><rect x="1.5" y="7.2" width="1.3" height="1.3" fill="#e0e0e0"/><rect x="1.5" y="9.4" width="1.3" height="1.3" fill="#e0e0e0"/><rect x="3.7" y="5.0" width="1.3" height="1.3" fill="#e0e0e0"/><rect x="3.7" y="7.2" width="1.3" height="1.3" fill="#e0e0e0"/><rect x="3.7" y="9.4" width="1.3" height="1.3" fill="#e0e0e0"/><rect x="5.9" y="5.0" width="1.3" height="1.3" fill="#e0e0e0"/><rect x="5.9" y="7.2" width="1.3" height="1.3" fill="#e0e0e0"/><rect x="5.9" y="9.4" width="1.3" height="1.3" fill="#e0e0e0"/></svg>
<div class="t" style="left:815px;top:509px;font-size:12px;letter-spacing:-0.25px;line-height:14px;color:#f4f4f4">SalesIN</div>
<div class="a" style="left:751px;top:526px;width:156px;height:22px;background:#646464;border:1px solid #363636;border-radius:4px"></div>
<div class="a" style="left:781px;top:532px;width:12px;height:12px;background:#fff;border:2px solid #cacaca"></div>
<svg class="a" style="left:796px;top:532px" width="13" height="12"><rect x="0" y="0" width="13" height="12" fill="#a0a0a0"/><rect x="0.5" y="0.5" width="12" height="1.8" fill="#b0b0b0"/><rect x="1" y="3" width="3.3" height="8.3" fill="#d8d8d8"/><rect x="5" y="3" width="7.3" height="8.3" fill="#fff"/><path d="M12 6.6 L12 5.3 L7.6 5.3 L9.6 7.7 L7.6 10.1 L12 10.1 L12 8.8" stroke="#2a2a2a" stroke-width="1.3" fill="none"/></svg>
<div class="t" style="left:815px;top:531px;font-size:12px;letter-spacing:-0.25px;line-height:14px;color:#f4f4f4">Sec</div>
<div class="a" style="left:751px;top:548px;width:156px;height:22px;background:#646464;border:1px solid #363636;border-radius:4px"></div>
<div class="a" style="left:781px;top:554px;width:12px;height:12px;background:#fff;border:2px solid #cacaca"></div>
<svg class="a" style="left:796px;top:554px" width="13" height="12"><rect x="0" y="0" width="13" height="12" fill="#a0a0a0"/><rect x="0.5" y="0.5" width="12" height="1.8" fill="#b0b0b0"/><rect x="1" y="3" width="3.3" height="8.3" fill="#d8d8d8"/><rect x="5" y="3" width="7.3" height="8.3" fill="#fff"/><path d="M11.3 3.6 Q9.6 3.3 9.2 5 L7.9 10.2 Q7.5 11.6 5.6 11.4" stroke="#2a2a2a" stroke-width="1.2" fill="none"/><path d="M7.2 6.6 L10.8 6.6" stroke="#2a2a2a" stroke-width="1.1"/><path d="M9.3 8.2 L12.3 11.6 M12.3 8.2 L9.3 11.6" stroke="#2a2a2a" stroke-width="1.1"/></svg>
<div class="t" style="left:815px;top:553px;font-size:12px;letter-spacing:-0.25px;line-height:14px;color:#f4f4f4">Today</div>
<div class="a" style="left:751px;top:570px;width:156px;height:22px;background:#646464;border:1px solid #f2c811;box-shadow:0 0 0 0.6px rgba(242,200,17,0.6);border-radius:4px"></div>
<div class="a" style="left:781px;top:576px;width:12px;height:12px;background:#fff;border:2px solid #cacaca"></div>
<svg class="a" style="left:796px;top:576px" width="13" height="12"><rect x="0" y="0" width="13" height="12" fill="#a0a0a0"/><rect x="0.5" y="0.5" width="12" height="1.8" fill="#b0b0b0"/><rect x="1" y="3" width="3.3" height="8.3" fill="#d8d8d8"/><rect x="5" y="3" width="7.3" height="8.3" fill="#fff"/><path d="M11.3 3.6 Q9.6 3.3 9.2 5 L7.9 10.2 Q7.5 11.6 5.6 11.4" stroke="#2a2a2a" stroke-width="1.2" fill="none"/><path d="M7.2 6.6 L10.8 6.6" stroke="#2a2a2a" stroke-width="1.1"/><path d="M9.3 8.2 L12.3 11.6 M12.3 8.2 L9.3 11.6" stroke="#2a2a2a" stroke-width="1.1"/></svg>
<div class="t" style="left:815px;top:575px;font-size:12px;letter-spacing:-0.25px;line-height:14px;color:#f4f4f4">Today2</div>
<div class="a" style="left:751px;top:592px;width:156px;height:22px;background:#646464;border:1px solid #363636;border-radius:4px"></div>
<div class="a" style="left:781px;top:598px;width:12px;height:12px;background:#fff;border:2px solid #cacaca"></div>
<svg class="a" style="left:796px;top:598px" width="13" height="12"><rect x="0" y="0" width="13" height="12" fill="#a0a0a0"/><rect x="0.5" y="0.5" width="12" height="1.8" fill="#b0b0b0"/><rect x="1" y="3" width="3.3" height="8.3" fill="#d8d8d8"/><rect x="5" y="3" width="7.3" height="8.3" fill="#fff"/><path d="M12 6.6 L12 5.3 L7.6 5.3 L9.6 7.7 L7.6 10.1 L12 10.1 L12 8.8" stroke="#2a2a2a" stroke-width="1.3" fill="none"/></svg>
<div class="t" style="left:815px;top:597px;font-size:12px;letter-spacing:-0.25px;line-height:14px;color:#f4f4f4">YearInDt</div>
<div class="a" style="left:907px;top:213px;width:5.5px;height:398px;background:#3c3a3a"></div>
<div class="a" style="left:907px;top:213px;width:5.5px;height:366px;background:#706c6c;border-radius:3px 3px 0 0"></div>
<div class="a" style="left:912.5px;top:117px;width:1.5px;height:494px;background:#2d8ae0"></div>
<div class="a" style="left:713px;top:609px;width:200px;height:2px;background:#2a2a2a"></div>
<svg class="a" style="left:14px;top:32px;overflow:visible" width="32" height="34" viewBox="14 32 32 34"><rect x="16" y="37" width="24" height="25" fill="#d2e2f2"/><path d="M16 40 L40 40 M16 45 L30 45 M16 50 L30 50 M16 55 L30 55" stroke="#c0d3e8" stroke-width="1"/><rect x="21" y="37.5" width="14" height="3.5" fill="#95a5c2"/><rect x="25.5" y="34" width="4" height="4" fill="none" stroke="#8c9cb9" stroke-width="1.3"/><path d="M30.5 45.5 L39 45.5 L43.5 50 L43.5 63.5 L30.5 63.5 Z" fill="#e9f5fc" stroke="#a3b0bf" stroke-width="1"/><path d="M39 45.5 L39 50 L43.5 50" fill="none" stroke="#a3b0bf" stroke-width="1"/></svg>
<svg class="a" style="left:52px;top:32px;overflow:visible" width="16" height="16" viewBox="52 32 16 16"><path d="M55 33 L63.5 42.5 M66 33 L57.5 42.5" stroke="#555" stroke-width="1.4"/><circle cx="56.5" cy="44.3" r="2.4" fill="#fff" stroke="#3b72c4" stroke-width="1.2"/><circle cx="64.5" cy="44.3" r="2.4" fill="#fff" stroke="#3b72c4" stroke-width="1.2"/></svg>
<svg class="a" style="left:51px;top:54px;overflow:visible" width="17" height="16" viewBox="51 54 17 16"><path d="M52.5 55.5 L56.5 55.5 L58.5 57.5 L58.5 65.5 L52.5 65.5 Z" fill="#fff" stroke="#555" stroke-width="1"/><path d="M54 59.5 L57 59.5 M54 61.5 L57 61.5" stroke="#3b72c4" stroke-width="0.8"/><path d="M58.5 58 L63.5 58 L66.5 61 L66.5 68.5 L58.5 68.5 Z" fill="#fff" stroke="#555" stroke-width="1"/><path d="M60 62.5 L65 62.5 M60 64.5 L65 64.5 M60 66.5 L65 66.5" stroke="#3b72c4" stroke-width="0.8"/></svg>
<svg class="a" style="left:52px;top:76px;overflow:visible" width="17" height="15" viewBox="52 76 17 15"><path d="M62 81.5 L67.5 77 L69 78.5 L64.5 84 Z" fill="#555"/><path d="M53 85 L61 81 L64 84 L60 90.5 Z" fill="#e6c36c"/></svg>
<svg class="a" style="left:91px;top:33px;overflow:visible" width="30" height="32" viewBox="91 33 30 32"><path d="M92.5 34.5 L106 34.5 L112.5 41.5 L112.5 61.5 L92.5 61.5 Z" fill="#fff" stroke="#6a6a6a" stroke-width="1.2"/><path d="M106 34.5 L106 41.5 L112.5 41.5" fill="none" stroke="#6a6a6a" stroke-width="1.2"/><path d="M107 48 L107 61.5 A6 2.3 0 0 0 119 61.5 L119 48 Z" fill="#e6c36e"/><ellipse cx="113" cy="48" rx="6" ry="2.3" fill="#e6c36e"/><path d="M107 50.3 A6 2.3 0 0 0 119 50.3" fill="none" stroke="#fff" stroke-width="0.9"/></svg>
<svg class="a" style="left:138px;top:33px;overflow:visible" width="30" height="32" viewBox="138 33 30 32"><path d="M139.5 34.5 L153 34.5 L159.5 41.5 L159.5 61.5 L139.5 61.5 Z" fill="#fff" stroke="#6a6a6a" stroke-width="1.2"/><path d="M153 34.5 L153 41.5 L159.5 41.5" fill="none" stroke="#6a6a6a" stroke-width="1.2"/><circle cx="158.5" cy="56.4" r="7" fill="#fff" stroke="#3b72c4" stroke-width="1.1"/><path d="M158.5 51 L158.5 56.8 L162.5 56.8" fill="none" stroke="#555" stroke-width="1.2"/></svg>
<svg class="a" style="left:183px;top:34px;overflow:visible" width="30" height="27" viewBox="183 34 30 27"><rect x="184.5" y="39" width="27" height="20.5" fill="#fff" stroke="#666" stroke-width="1.1"/><rect x="184" y="35" width="28" height="4.8" fill="#4a7cc4"/><path d="M193.5 40 L193.5 59 M202.5 40 L202.5 59 M185 44.5 L211 44.5 M185 49.5 L211 49.5 M185 54.5 L211 54.5" stroke="#a6b2c6" stroke-width="1.1"/></svg>
<svg class="a" style="left:238px;top:34px;overflow:visible" width="32" height="31" viewBox="238 34 32 31"><rect x="239.5" y="35.5" width="27" height="25" fill="#fff" stroke="#666" stroke-width="1.1"/><rect x="240" y="36" width="26" height="4.2" fill="#4a7cc4"/><path d="M248.5 36 L248.5 60 M257.5 36 L257.5 60 M240 44.5 L266 44.5 M240 48.5 L266 48.5 M240 52.5 L266 52.5 M240 56.5 L266 56.5" stroke="#a3aec2" stroke-width="1"/><path d="M262.2 46.2 L265.4 49.4 L254.2 60.6 L251 57.4 Z" fill="#3f72b8" stroke="#fff" stroke-width="0.9"/><path d="M264.3 44.1 L265.8 42.6 L269 45.8 L267.5 47.3 Z" fill="#3f72b8" stroke="#fff" stroke-width="0.9"/><path d="M250.3 58.2 L253.4 61.3 L248 63.8 Z" fill="#3f72b8" stroke="#fff" stroke-width="0.7"/></svg>
<svg class="a" style="left:297px;top:32px;overflow:visible" width="31" height="34" viewBox="297 32 31 34"><path d="M298.5 33.5 L312 33.5 L318.5 40.5 L318.5 60.5 L298.5 60.5 Z" fill="#fff" stroke="#6a6a6a" stroke-width="1.2"/><path d="M312 33.5 L312 40.5 L318.5 40.5" fill="none" stroke="#6a6a6a" stroke-width="1.2"/><circle cx="317.8" cy="56.6" r="9" fill="#f1f3f2"/><path d="M312 55.5 A6 6 0 0 1 322.5 53" fill="none" stroke="#5fa08a" stroke-width="2.6"/><path d="M325.5 49.5 L325.5 57 L318.5 56 Z" fill="#5fa08a"/><path d="M323.6 57.7 A6 6 0 0 1 313.1 60.2" fill="none" stroke="#5fa08a" stroke-width="2.6"/><path d="M310.1 63.7 L310.1 56.2 L317.1 57.2 Z" fill="#5fa08a"/></svg>
<svg class="a" style="left:346px;top:31px;overflow:visible" width="33" height="33" viewBox="346 31 33 33"><rect x="349.5" y="34.5" width="27" height="27" fill="#fff" stroke="#6a6a6a" stroke-width="1.1"/><line x1="350" y1="48.5" x2="376" y2="48.5" stroke="#a8b4d0" stroke-width="1"/><rect x="352.5" y="43" width="3" height="3" fill="#6aa090"/><rect x="358.5" y="38.5" width="3" height="7.5" fill="#6aa090"/><rect x="364.5" y="41" width="3.5" height="5" fill="#e8954a"/><rect x="370.5" y="37" width="3.5" height="9" fill="#6aa090"/><path d="M352.5 57.5 L358.3 53.3 L365 58 L372 53" fill="none" stroke="#777" stroke-width="1"/><circle cx="352.5" cy="57.5" r="1.6" fill="#6aa090"/><circle cx="358.3" cy="53.3" r="2.4" fill="#e8954a"/><circle cx="365" cy="58" r="1.8" fill="#6aa090"/><circle cx="372" cy="53" r="2.8" fill="#6aa090"/><circle cx="352.8" cy="37.7" r="6.3" fill="#f1f3f2"/><circle cx="352.8" cy="37.7" r="7.00" fill="#f1f3f2"/><line x1="355.59" y1="37.70" x2="359.00" y2="37.70" stroke="#e9c66e" stroke-width="1.7"/><line x1="354.77" y1="39.67" x2="357.18" y2="42.08" stroke="#e9c66e" stroke-width="1.7"/><line x1="352.80" y1="40.49" x2="352.80" y2="43.90" stroke="#e9c66e" stroke-width="1.7"/><line x1="350.83" y1="39.67" x2="348.42" y2="42.08" stroke="#e9c66e" stroke-width="1.7"/><line x1="350.01" y1="37.70" x2="346.60" y2="37.70" stroke="#e9c66e" stroke-width="1.7"/><line x1="350.83" y1="35.73" x2="348.42" y2="33.32" stroke="#e9c66e" stroke-width="1.7"/><line x1="352.80" y1="34.91" x2="352.80" y2="31.50" stroke="#e9c66e" stroke-width="1.7"/><line x1="354.77" y1="35.73" x2="357.18" y2="33.32" stroke="#e9c66e" stroke-width="1.7"/><circle cx="352.8" cy="37.7" r="2.60" fill="#fff" stroke="#e9c66e" stroke-width="1.7"/></svg>
<svg class="a" style="left:388px;top:31px;overflow:visible" width="31" height="32" viewBox="388 31 31 32"><rect x="394" y="46" width="6.7" height="16" fill="#8aa0d8"/><rect x="402" y="36" width="6.8" height="26" fill="#6aa090"/><rect x="410.2" y="42" width="6.7" height="20" fill="#e8954a"/><circle cx="394.9" cy="37.4" r="7.00" fill="#f1f3f2"/><line x1="397.69" y1="37.40" x2="401.10" y2="37.40" stroke="#e9c66e" stroke-width="1.7"/><line x1="396.87" y1="39.37" x2="399.28" y2="41.78" stroke="#e9c66e" stroke-width="1.7"/><line x1="394.90" y1="40.19" x2="394.90" y2="43.60" stroke="#e9c66e" stroke-width="1.7"/><line x1="392.93" y1="39.37" x2="390.52" y2="41.78" stroke="#e9c66e" stroke-width="1.7"/><line x1="392.11" y1="37.40" x2="388.70" y2="37.40" stroke="#e9c66e" stroke-width="1.7"/><line x1="392.93" y1="35.43" x2="390.52" y2="33.02" stroke="#e9c66e" stroke-width="1.7"/><line x1="394.90" y1="34.61" x2="394.90" y2="31.20" stroke="#e9c66e" stroke-width="1.7"/><line x1="396.87" y1="35.43" x2="399.28" y2="33.02" stroke="#e9c66e" stroke-width="1.7"/><circle cx="394.9" cy="37.4" r="2.60" fill="#fff" stroke="#e9c66e" stroke-width="1.7"/></svg>
<svg class="a" style="left:434px;top:40px;overflow:visible" width="30" height="22" viewBox="434 40 30 22"><rect x="435.6" y="41.6" width="26.8" height="12.4" rx="2.5" fill="#fff" stroke="#6a6a6a" stroke-width="1.2"/><circle cx="440.3" cy="48" r="2.3" fill="#7a95d0"/><line x1="445.5" y1="48" x2="459.5" y2="48" stroke="#5a5a5a" stroke-width="2.4"/><path d="M454.3 52.3 L454.3 60.5 L456.3 58.6 L457.8 61.2 L459 60.6 L457.6 58 L460.2 57.8 Z" fill="#fff" stroke="#8a8a8a" stroke-width="0.8"/></svg>
<svg class="a" style="left:474px;top:32px;overflow:visible" width="18" height="15" viewBox="474 32 18 15"><rect x="475.5" y="33.5" width="14" height="12" fill="#fff" stroke="#6a6a6a" stroke-width="1.1"/><path d="M477.5 40.5 L479.5 35.5 L481.5 40.5 M478.2 39 L480.8 39" stroke="#3f72b8" stroke-width="1.1" fill="none"/><path d="M483 37 L488 37 M483 39.5 L488 39.5 M477 43 L488 43" stroke="#8a9ac0" stroke-width="0.9"/></svg>
<svg class="a" style="left:474px;top:53px;overflow:visible" width="19" height="18" viewBox="474 53 19 18"><rect x="475.5" y="54.5" width="13" height="12.5" fill="#fff" stroke="#6a6a6a" stroke-width="1.1"/><circle cx="484.5" cy="57.5" r="1.2" fill="#e6c36e"/><path d="M477 66 L477 61.5 L479.5 59.5 L482 61.5 L482 66 Z" fill="#b8d0e8"/><rect x="482.5" y="61.8" width="8" height="5.7" fill="#fff" stroke="#3f72b8" stroke-width="1.2"/><path d="M486.5 67.5 L486.5 69.5 M484 69.7 L489 69.7" stroke="#3f72b8" stroke-width="1.1"/></svg>
<svg class="a" style="left:474px;top:76px;overflow:visible" width="26" height="16" viewBox="474 76 26 16"><circle cx="479" cy="83" r="3.4" fill="none" stroke="#3f72b8" stroke-width="1.5"/><rect x="482.5" y="77.8" width="7.5" height="8" fill="#fff" stroke="#3f72b8" stroke-width="1.5"/><path d="M486.5 82 L491 90.5 L482 90.5 Z" fill="#3f72b8"/><path d="M493.2 82 L498.4 82 L495.8 85 Z" fill="#262626"/></svg>
<svg class="a" style="left:531px;top:31px;overflow:visible" width="33" height="34" viewBox="531 31 33 34"><path d="M538.5 40 L538.5 36.5 A3.5 3.5 0 0 1 545.5 36.5 L545.5 40" fill="none" stroke="#e0b420" stroke-width="1.3"/><path d="M542 40 L542 38 A1.5 1.5 0 0 1 545 38" fill="none" stroke="#e0b420" stroke-width="0"/><path d="M548 37.5 A2 2 0 0 1 550 40" fill="none" stroke="#e0b420" stroke-width="1.2"/><path d="M533 43.3 L558 38.9 L558 58.6 L547 60.8 L533 57.5 Z" fill="#e0b420"/><rect x="547.3" y="56.5" width="5" height="8" fill="#8aa0d8" stroke="#f1f3f2" stroke-width="0.8"/><rect x="552.5" y="50.5" width="5" height="14" fill="#6aa090" stroke="#f1f3f2" stroke-width="0.8"/><rect x="557.5" y="53.5" width="5" height="11" fill="#e8954a" stroke="#f1f3f2" stroke-width="0.8"/></svg>
<svg class="a" style="left:586px;top:34px;overflow:visible" width="32" height="27" viewBox="586 34 32 27"><path d="M588.5 38 L600 38 L603 36 L612 36 L612 50 L588.5 57 Z" fill="#fff" stroke="#e6c36e" stroke-width="1.2"/><path d="M588.5 57 L594 43.5 L617 43.5 L612 57 Z" fill="#f0d49a" stroke="#e6c36e" stroke-width="1"/><rect x="601.8" y="51.5" width="4.6" height="8" fill="#8aa0d8" stroke="#f1f3f2" stroke-width="0.8"/><rect x="606.6" y="45.5" width="4.6" height="14" fill="#6aa090" stroke="#f1f3f2" stroke-width="0.8"/><rect x="611.6" y="48.3" width="4.6" height="11.2" fill="#e8954a" stroke="#f1f3f2" stroke-width="0.8"/></svg>
<svg class="a" style="left:655px;top:32px;overflow:visible" width="32" height="31" viewBox="655 32 32 31"><path d="M668.7 43.5 L674.2 38.5 M668.7 52 L672.3 55.5" stroke="#9aa6b9" stroke-width="1.3"/><rect x="657.9000000000001" y="42.800000000000004" width="10.1" height="9.999999999999998" fill="#eaf4fc" stroke="#9aa6b9" stroke-width="1.3"/><rect x="657.7" y="42.6" width="10.5" height="2.5" fill="#7d9bd3"/><path d="M660.2 48.1 L665.7 48.1 M660.2 50.6 L665.7 50.6" stroke="#a9c0dc" stroke-width="0.9"/><rect x="674.9000000000001" y="33.900000000000006" width="10.299999999999931" height="9.899999999999997" fill="#eaf4fc" stroke="#9aa6b9" stroke-width="1.3"/><rect x="674.7" y="33.7" width="10.699999999999932" height="2.5" fill="#7d9bd3"/><path d="M677.2 39.2 L682.9 39.2 M677.2 41.7 L682.9 41.7" stroke="#a9c0dc" stroke-width="0.9"/><rect x="673.0" y="51.0" width="10.200000000000022" height="10.000000000000005" fill="#eaf4fc" stroke="#9aa6b9" stroke-width="1.3"/><rect x="672.8" y="50.8" width="10.600000000000023" height="2.5" fill="#7d9bd3"/><path d="M675.3 56.3 L680.9 56.3 M675.3 58.8 L680.9 58.8" stroke="#a9c0dc" stroke-width="0.9"/></svg>
<svg class="a" style="left:721px;top:31px;overflow:visible" width="20" height="18" viewBox="721 31 20 18"><path d="M723.5 39 L723.5 46.5 L729 46.5 M734 37.5 L738.7 37.5 L738.7 46.5" fill="none" stroke="#5a5a5a" stroke-width="1.1"/><rect x="730.5" y="39.0" width="6.5" height="8.5" fill="#fff" stroke="#5a5a5a" stroke-width="1"/><rect x="731.5" y="40.0" width="4.5" height="1.6" fill="#5a5a5a"/><rect x="731.5" y="42.5" width="1.1" height="1.1" fill="#5a5a5a"/><rect x="731.5" y="44.1" width="1.1" height="1.1" fill="#5a5a5a"/><rect x="731.5" y="45.7" width="1.1" height="1.1" fill="#5a5a5a"/><rect x="733.1" y="42.5" width="1.1" height="1.1" fill="#5a5a5a"/><rect x="733.1" y="44.1" width="1.1" height="1.1" fill="#5a5a5a"/><rect x="733.1" y="45.7" width="1.1" height="1.1" fill="#5a5a5a"/><rect x="734.7" y="42.5" width="1.1" height="1.1" fill="#5a5a5a"/><rect x="734.7" y="44.1" width="1.1" height="1.1" fill="#5a5a5a"/><rect x="734.7" y="45.7" width="1.1" height="1.1" fill="#5a5a5a"/><circle cx="726.4" cy="35.4" r="4.00" fill="#f1f3f2"/><line x1="727.84" y1="35.40" x2="729.60" y2="35.40" stroke="#e9c66e" stroke-width="1.1"/><line x1="727.42" y1="36.42" x2="728.66" y2="37.66" stroke="#e9c66e" stroke-width="1.1"/><line x1="726.40" y1="36.84" x2="726.40" y2="38.60" stroke="#e9c66e" stroke-width="1.1"/><line x1="725.38" y1="36.42" x2="724.14" y2="37.66" stroke="#e9c66e" stroke-width="1.1"/><line x1="724.96" y1="35.40" x2="723.20" y2="35.40" stroke="#e9c66e" stroke-width="1.1"/><line x1="725.38" y1="34.38" x2="724.14" y2="33.14" stroke="#e9c66e" stroke-width="1.1"/><line x1="726.40" y1="33.96" x2="726.40" y2="32.20" stroke="#e9c66e" stroke-width="1.1"/><line x1="727.42" y1="34.38" x2="728.66" y2="33.14" stroke="#e9c66e" stroke-width="1.1"/><circle cx="726.4" cy="35.4" r="1.34" fill="#fff" stroke="#e9c66e" stroke-width="1.1"/></svg>
<svg class="a" style="left:721px;top:53px;overflow:visible" width="20" height="19" viewBox="721 53 20 19"><path d="M723.5 60 L723.5 69.5 L738.5 69.5 L738.5 54.5 L730 54.5" fill="none" stroke="#5a5a5a" stroke-width="1.1"/><rect x="730" y="54" width="9" height="3" fill="#5a5a5a"/><rect x="724" y="60" width="5" height="9" fill="#b9d3ea"/><path d="M729.5 57 L729.5 69 M733.8 57 L733.8 69 M724 60.5 L738 60.5 M724 65 L738 65" stroke="#6a6a6a" stroke-width="0.8"/><circle cx="726.4" cy="57.3" r="4.00" fill="#f1f3f2"/><line x1="727.84" y1="57.30" x2="729.60" y2="57.30" stroke="#e9c66e" stroke-width="1.1"/><line x1="727.42" y1="58.32" x2="728.66" y2="59.56" stroke="#e9c66e" stroke-width="1.1"/><line x1="726.40" y1="58.74" x2="726.40" y2="60.50" stroke="#e9c66e" stroke-width="1.1"/><line x1="725.38" y1="58.32" x2="724.14" y2="59.56" stroke="#e9c66e" stroke-width="1.1"/><line x1="724.96" y1="57.30" x2="723.20" y2="57.30" stroke="#e9c66e" stroke-width="1.1"/><line x1="725.38" y1="56.28" x2="724.14" y2="55.04" stroke="#e9c66e" stroke-width="1.1"/><line x1="726.40" y1="55.86" x2="726.40" y2="54.10" stroke="#e9c66e" stroke-width="1.1"/><line x1="727.42" y1="56.28" x2="728.66" y2="55.04" stroke="#e9c66e" stroke-width="1.1"/><circle cx="726.4" cy="57.3" r="1.34" fill="#fff" stroke="#e9c66e" stroke-width="1.1"/></svg>
<svg class="a" style="left:721px;top:75px;overflow:visible" width="20" height="18" viewBox="721 75 20 18"><path d="M723.5 83 L723.5 90.5 L726 90.5 M734 81.5 L738.7 81.5 L738.7 90.5" fill="none" stroke="#5a5a5a" stroke-width="1.1"/><rect x="730.5" y="83.0" width="6.5" height="8.5" fill="#fff" stroke="#5a5a5a" stroke-width="1"/><rect x="731.5" y="84.0" width="4.5" height="1.6" fill="#5a5a5a"/><rect x="731.5" y="86.5" width="1.1" height="1.1" fill="#5a5a5a"/><rect x="731.5" y="88.1" width="1.1" height="1.1" fill="#5a5a5a"/><rect x="731.5" y="89.7" width="1.1" height="1.1" fill="#5a5a5a"/><rect x="733.1" y="86.5" width="1.1" height="1.1" fill="#5a5a5a"/><rect x="733.1" y="88.1" width="1.1" height="1.1" fill="#5a5a5a"/><rect x="733.1" y="89.7" width="1.1" height="1.1" fill="#5a5a5a"/><rect x="734.7" y="86.5" width="1.1" height="1.1" fill="#5a5a5a"/><rect x="734.7" y="88.1" width="1.1" height="1.1" fill="#5a5a5a"/><rect x="734.7" y="89.7" width="1.1" height="1.1" fill="#5a5a5a"/><path d="M730 80 L725.5 86 L728.5 86 L726 92 L731.5 85 L728.5 85 Z" fill="#e6c36e"/><circle cx="726.4" cy="79.4" r="4.00" fill="#f1f3f2"/><line x1="727.84" y1="79.40" x2="729.60" y2="79.40" stroke="#e9c66e" stroke-width="1.1"/><line x1="727.42" y1="80.42" x2="728.66" y2="81.66" stroke="#e9c66e" stroke-width="1.1"/><line x1="726.40" y1="80.84" x2="726.40" y2="82.60" stroke="#e9c66e" stroke-width="1.1"/><line x1="725.38" y1="80.42" x2="724.14" y2="81.66" stroke="#e9c66e" stroke-width="1.1"/><line x1="724.96" y1="79.40" x2="723.20" y2="79.40" stroke="#e9c66e" stroke-width="1.1"/><line x1="725.38" y1="78.38" x2="724.14" y2="77.14" stroke="#e9c66e" stroke-width="1.1"/><line x1="726.40" y1="77.96" x2="726.40" y2="76.20" stroke="#e9c66e" stroke-width="1.1"/><line x1="727.42" y1="78.38" x2="728.66" y2="77.14" stroke="#e9c66e" stroke-width="1.1"/><circle cx="726.4" cy="79.4" r="1.34" fill="#fff" stroke="#e9c66e" stroke-width="1.1"/></svg>
<svg class="a" style="left:862px;top:32px;overflow:visible" width="36" height="34" viewBox="862 32 36 34"><path d="M867 52.5 Q864.5 52 864.5 49 L864.5 38.5 Q864.5 34.5 868.5 34.5 L891.5 34.5 Q895.5 34.5 895.5 38.5 L895.5 52" fill="none" stroke="#3c3c3c" stroke-width="1.5"/><path d="M871.7 52.5 L871.7 56 M877.3 45.5 L877.3 56 M882.7 48.5 L882.7 55 M888.3 41.5 L888.3 50" stroke="#3a3a3a" stroke-width="2.8" stroke-linecap="round"/><circle cx="889" cy="56.9" r="7" fill="#3f72b8" stroke="#f1f3f2" stroke-width="1"/><path d="M889 61 L889 53.5 M885.5 56.5 L889 53 L892.5 56.5" fill="none" stroke="#fff" stroke-width="2"/></svg>
<svg class="a" style="left:12px;top:129px;overflow:visible" width="22" height="21" viewBox="12 129 22 21"><rect x="13.6" y="130.6" width="17.8" height="16.8" fill="none" stroke="#fff" stroke-width="1.3"/><rect x="15.8" y="136.7" width="3.4" height="10.3" fill="#fff"/><rect x="20.9" y="141" width="3.2" height="6" fill="#fff"/><rect x="26" y="134.6" width="3.2" height="12.4" fill="#fff"/></svg>
<svg class="a" style="left:12px;top:170px;overflow:visible" width="22" height="22" viewBox="12 170 22 22"><rect x="13.5" y="171.5" width="18" height="18.5" fill="none" stroke="#707070" stroke-width="1.2"/><rect x="13" y="171" width="19" height="3.5" fill="#707070"/><path d="M19.5 174 L19.5 190 M25.5 174 L25.5 190 M13 179.5 L32 179.5 M13 185 L32 185" stroke="#707070" stroke-width="1.1"/></svg>
<svg class="a" style="left:12px;top:213px;overflow:visible" width="22" height="20" viewBox="12 213 22 20"><path d="M21 221.5 L24.2 218 M21 224.5 L24.2 228" stroke="#707070" stroke-width="1.1"/><rect x="13.5" y="219.79999999999998" width="6.8999999999999995" height="6.500000000000017" fill="none" stroke="#707070" stroke-width="1.2"/><rect x="12.9" y="219.2" width="8.1" height="2.2" fill="#707070"/><rect x="24.8" y="214.7" width="6.400000000000001" height="6.100000000000011" fill="none" stroke="#707070" stroke-width="1.2"/><rect x="24.2" y="214.1" width="7.600000000000001" height="2.2" fill="#707070"/><rect x="24.8" y="224.9" width="6.400000000000001" height="6.4999999999999885" fill="none" stroke="#707070" stroke-width="1.2"/><rect x="24.2" y="224.3" width="7.600000000000001" height="2.2" fill="#707070"/></svg>
<svg class="a" style="left:59px;top:127px;overflow:visible" width="56" height="17" viewBox="59 127 56 17"><path d="M61 129 L75 142 M75 129 L61 142" stroke="#c8c8c8" stroke-width="2"/><path d="M98.5 134.5 L103 139.5 L112.5 128.5" fill="none" stroke="#c8c8c8" stroke-width="2.2"/></svg>
<svg class="a" style="left:690px;top:131px;overflow:visible" width="14" height="9" viewBox="690 131 14 9"><path d="M691.5 132.5 L696.6 137.8 L701.7 132.5" fill="none" stroke="#505050" stroke-width="1.8"/></svg>
<svg class="a" style="left:657px;top:154px;overflow:visible" width="42" height="14" viewBox="657 154 42 14"><path d="M658.7 159 L658.7 166.2 L671.5 166.2 L671.5 155.7 L664 155.7" fill="none" stroke="#666" stroke-width="1"/><path d="M658.7 162 L663.5 162 L663.5 166" fill="none" stroke="#666" stroke-width="1"/><path d="M665 161 L671 155.5 M667.5 155.7 L671.5 155.7 L671.5 159.5" fill="none" stroke="#666" stroke-width="1"/><circle cx="683.2" cy="160.7" r="1.2" fill="#666"/><circle cx="689.5" cy="160.7" r="1.2" fill="#666"/><circle cx="695.8" cy="160.7" r="1.2" fill="#666"/></svg>
<svg class="a" style="left:725px;top:134px;overflow:visible" width="12" height="15" viewBox="725 134 12 15"><path d="M734 135.5 L727.5 141.5 L734 147.5" fill="none" stroke="#c8c8c8" stroke-width="1.3"/></svg>
<svg class="a" style="left:890px;top:134px;overflow:visible" width="12" height="15" viewBox="890 134 12 15"><path d="M892.5 135.5 L899 141.5 L892.5 147.5" fill="none" stroke="#c8c8c8" stroke-width="1.3"/></svg>
<svg class="a" style="left:760px;top:174px;overflow:visible" width="22" height="20" viewBox="760 174 22 20"><circle cx="772.7" cy="181" r="5" fill="none" stroke="#bfbfbf" stroke-width="1.2"/><path d="M769.2 184.7 L763.5 190.5" stroke="#bfbfbf" stroke-width="1.3"/></svg>
<svg class="a" style="left:754px;top:217px;overflow:visible" width="34" height="16" viewBox="754 217 34 16"><path d="M763 220.8 L763 227 L756 227 Z" fill="#a8a8a8"/><rect x="772" y="219" width="13" height="12" fill="#b4b4b4"/><rect x="773.3" y="222" width="3" height="2.2" fill="#fff"/><rect x="777.2" y="222" width="3" height="2.2" fill="#fff"/><rect x="781" y="222" width="3" height="2.2" fill="#fff"/><rect x="773.3" y="225" width="3" height="2.2" fill="#fff"/><rect x="777.2" y="225" width="3" height="2.2" fill="#fff"/><rect x="781" y="225" width="3" height="2.2" fill="#fff"/><rect x="773.3" y="228" width="3" height="2.2" fill="#fff"/><rect x="777.2" y="228" width="3" height="2.2" fill="#fff"/><rect x="781" y="228" width="3" height="2.2" fill="#fff"/></svg>
<div class="a" style="left:737px;top:179.5px;transform-origin:0 0;transform:rotate(90deg) scaleX(0.86);font-size:15.5px;line-height:13px;-webkit-text-stroke:0.3px #f0f0f0;color:#f0f0f0;white-space:nowrap">VISUALIZATIONS</div>
<div class="a" style="left:737px;top:307.5px;transform-origin:0 0;transform:rotate(90deg) scaleX(0.86);font-size:15.5px;line-height:13px;-webkit-text-stroke:0.3px #f0f0f0;color:#f0f0f0;white-space:nowrap">FILTERS</div>
<svg class="a" style="left:48px;top:586px" width="24" height="11"><path d="M6.5 1 L2 5.5 L6.5 10 Z M17 1 L21.5 5.5 L17 10 Z" fill="#c4c4c4"/></svg></body></html>
